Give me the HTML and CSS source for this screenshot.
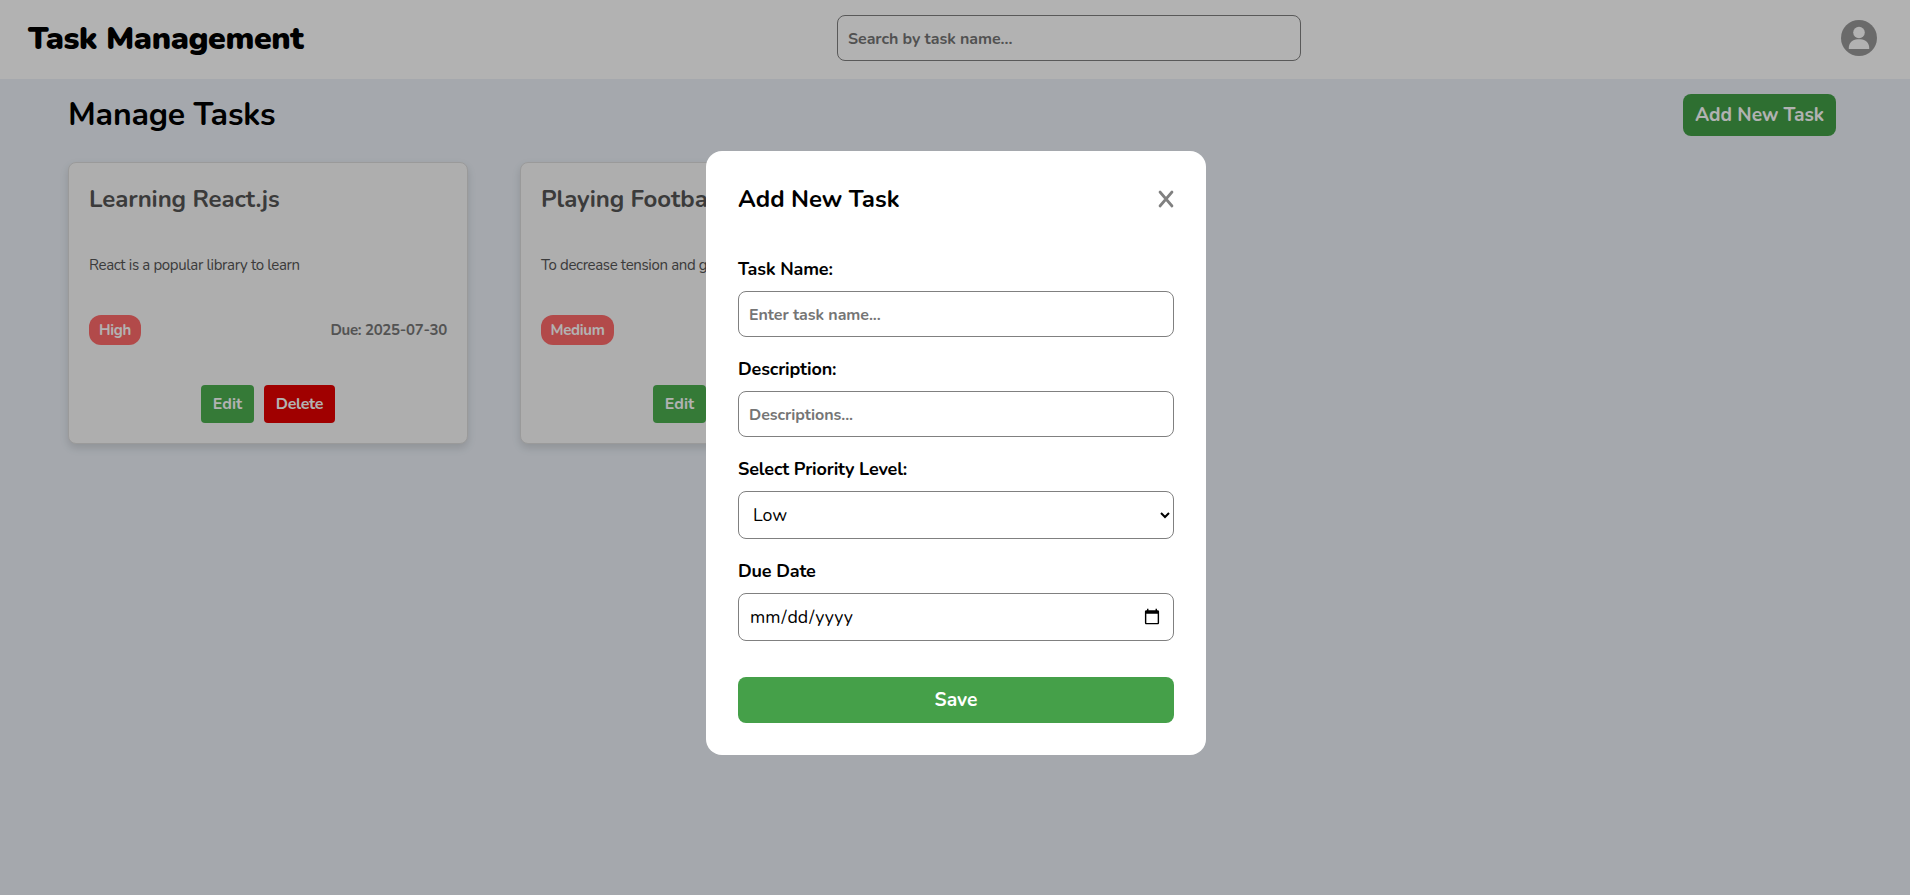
FILE: index.html
```html
<!DOCTYPE html>
<html lang="en">
<head>
<meta charset="utf-8">
<title>Task Management</title>
<link rel="stylesheet" href="styles.css">
</head>
<body>
<header class="header">
  <h1 class="brand">Task Management</h1>
  <input class="field search" type="text" placeholder="Search by task name...">
  <svg class="avatar" viewBox="0 0 36 36"><circle cx="18" cy="18" r="18" fill="#999"/><circle cx="18" cy="12.5" r="5.8" fill="#fff"/><path d="M7.8 29v-1.2c0-5 3.7-8.6 8.7-8.6h3c5 0 8.7 3.6 8.7 8.6V29z" fill="#fff"/></svg>
</header>
<main class="main">
  <div class="toolbar">
    <h2 class="page-title">Manage Tasks</h2>
    <button class="add">Add New Task</button>
  </div>
  <div class="cards">
    <article class="card">
      <h3 class="card-title">Learning React.js</h3>
      <p class="card-text">React is a popular library to learn</p>
      <div class="meta"><span class="badge">High</span><span class="due">Due: 2025-07-30</span></div>
      <div class="actions"><button class="btn edit">Edit</button><button class="btn delete">Delete</button></div>
    </article>
    <article class="card">
      <h3 class="card-title">Playing Football</h3>
      <p class="card-text">To decrease tension and get fit</p>
      <div class="meta"><span class="badge medium">Medium</span><span class="due">Due: 2025-07-30</span></div>
      <div class="actions"><button class="btn edit">Edit</button><button class="btn delete">Delete</button></div>
    </article>
  </div>
</main>
<div class="overlay">
  <form class="modal">
    <div class="modal-head">
      <h2 class="modal-title">Add New Task</h2>
      <svg class="close" viewBox="0 0 16 18"><path d="M2 2l12 14M14 2L2 16" fill="none" stroke="#808080" stroke-width="2.7" stroke-linecap="round"/></svg>
    </div>
    <label class="label" for="name">Task Name:</label>
    <input class="field" id="name" type="text" placeholder="Enter task name...">
    <label class="label" for="desc">Description:</label>
    <input class="field" id="desc" type="text" placeholder="Descriptions...">
    <label class="label" for="level">Select Priority Level:</label>
    <select class="field tall" id="level"><option>Low</option><option>Medium</option><option>High</option></select>
    <label class="label" for="date">Due Date</label>
    <input class="field tall" id="date" type="date">
    <button class="save" type="button">Save</button>
  </form>
</div>
</body>
</html>
```
FILE: styles.css
```css
* { box-sizing: border-box; margin: 0; padding: 0; }
body { font-family: Nunito, Lato, "Open Sans", sans-serif; background: #ecf1f8; color: #000; height: 895px; overflow: hidden; }
button { font-family: inherit; border: 0; color: #fff; font-weight: 700; }
.header { height: 79px; padding: 0 33px 3px 28px; background: #fff; display: flex; align-items: center; }
.brand { flex: none; width: 341px; margin-right: 210px; padding-top: 2px; font-size: 32px; line-height: 44px; font-weight: 900; letter-spacing: -.38px; white-space: nowrap; }
.field { display: block; width: 100%; height: 46px; padding: 1px 10px 0; border: 1px solid #808080; border-radius: 8px; background: #fff; font: 700 16px/22px Nunito, Lato, sans-serif; color: #000; }
.field::placeholder { color: #757575; opacity: 1; letter-spacing: -.05px; }
.search { width: 464px; margin-left: 258px; }
.avatar { width: 36px; height: 36px; margin-left: auto; }
.main { padding: 15px 74px 0 68px; }
.toolbar { display: flex; justify-content: space-between; height: 42px; align-items: center; margin-bottom: 26px; }
.page-title { font-size: 32px; line-height: 42px; font-weight: 700; letter-spacing: -.2px; }
.add { width: 153px; height: 42px; border-radius: 8px; background: #43a047; font-size: 19.2px; }
.cards { display: flex; gap: 52px; }
.card { width: 400px; height: 282px; padding: 20px; border: 1px solid #ddd; border-radius: 8px; background: #f9f9f9; box-shadow: 0 4px 8px rgba(0, 0, 0, .13); }
.card-title { font-size: 24px; line-height: 32px; font-weight: 700; letter-spacing: -.07px; color: #555; white-space: nowrap; }
.card-text { margin-top: 39px; font-size: 15px; line-height: 22px; letter-spacing: -.35px; color: #555; white-space: nowrap; }
.meta { display: flex; justify-content: space-between; align-items: center; margin-top: 39px; font-size: 15px; letter-spacing: -.3px; font-weight: 700; }
.badge { width: 52px; height: 30px; line-height: 30px; border-radius: 12px; background: #ff6b6b; color: #fff; text-align: center; }
.medium { width: 73px; }
.due { color: #777; }
.actions { display: flex; justify-content: center; gap: 10px; margin-top: 40px; }
.btn { height: 38px; border-radius: 4px; font-size: 16px; }
.edit { width: 53px; background: #4caf50; }
.delete { width: 71px; background: #e60000; letter-spacing: -.3px; }
.overlay { position: fixed; inset: 0; display: flex; align-items: center; justify-content: center; background: rgba(0, 0, 0, .3); }
.modal { width: 500px; height: 604px; margin: 11px 0 0 2px; padding: 32px; border-radius: 16px; background: #fff; }
.modal-head { height: 32px; display: flex; align-items: center; justify-content: space-between; margin-bottom: 42px; }
.modal-title { font-size: 24px; line-height: 32px; font-weight: 700; }
.close { width: 16px; height: 18px; }
.label { display: block; height: 24px; margin-bottom: 10px; font-size: 18px; line-height: 24px; letter-spacing: -.15px; font-weight: 700; }
.modal .field { margin-bottom: 20px; }
.modal .tall { height: 48px; padding-top: 0; font-size: 17.8px; font-weight: 400; }
.save { display: block; width: 100%; height: 46px; margin-top: 36px; border-radius: 8px; background: #45a049; font-size: 19.2px; }
```
